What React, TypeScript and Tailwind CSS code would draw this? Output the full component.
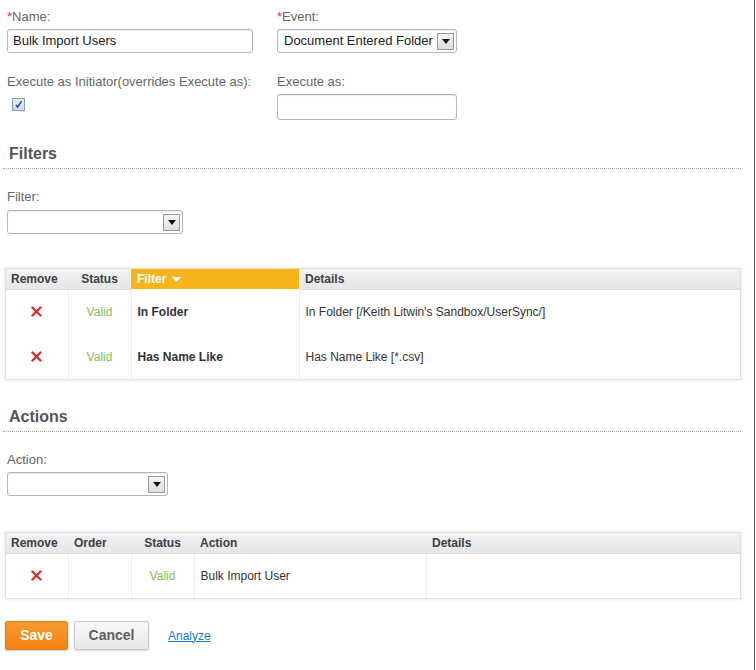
import React from "react";

const font = { fontFamily: '"Liberation Sans", Arial, sans-serif' };

function Arrow() {
  return (
    <div className="flex h-[17px] w-[17px] items-center justify-center border border-[#9a9a9a] bg-gradient-to-b from-[#f6f6f6] to-[#dcdcdc]">
      <svg width="8" height="5" viewBox="0 0 8 5">
        <path d="M0 0 H8 L4 5 Z" fill="#111" />
      </svg>
    </div>
  );
}

function Select({ w, value }: { w: string; value?: string }) {
  return (
    <div
      className={`flex h-[24px] items-center justify-between rounded-[3px] border border-[#b5b5b5] bg-white pl-[6px] pr-[2px] text-[13px] text-[#222] shadow-[inset_0_1px_1px_rgba(0,0,0,0.08)] ${w}`}
    >
      <span className="whitespace-nowrap">{value ?? ""}</span>
      <Arrow />
    </div>
  );
}

function XIcon() {
  return (
    <svg width="11" height="11" viewBox="0 0 11 11">
      <path d="M1.5 1.5 L9.5 9.5 M9.5 1.5 L1.5 9.5" stroke="#d2302a" strokeWidth="2.4" strokeLinecap="round" />
    </svg>
  );
}

function SectionHeading({ title }: { title: string }) {
  return (
    <div>
      <div className="h-[20px] pl-[2px] text-[16px] font-bold leading-[20px] text-[#555]">{title}</div>
      <div className="mx-[-4px] mt-[4px] w-[738px] border-t border-dotted border-[#a8a8a8]" />
    </div>
  );
}

const th = "h-[20px] border-b border-[#dcdcdc] bg-gradient-to-b from-[#f2f2f2] to-[#e6e6e6] text-[12px] font-bold text-[#3c4048] align-middle";
const td = "h-[45px] border-l border-[#ececec] align-middle text-[12px]";
const dark = "text-[#333]";
const green = "text-[#86bd52]";

export default function App() {
  return (
    <div className="flex min-h-[670px] bg-white" style={font}>
      <div className="w-[754px] pl-[7px] pt-[9px]">
        {/* Top form */}
        <div className="flex">
          <div className="w-[270px]">
            <div className="text-[13px] leading-[16px] text-[#666]">
              <span className="text-[#d33]">*</span>Name:
            </div>
            <div className="mt-[4px] flex h-[24px] w-[246px] items-center rounded-[3px] border border-[#b5b5b5] pl-[5px] text-[13px] text-[#222] shadow-[inset_0_1px_1px_rgba(0,0,0,0.08)]">
              Bulk Import Users
            </div>
          </div>
          <div>
            <div className="text-[13px] leading-[16px] text-[#666]">
              <span className="text-[#d33]">*</span>Event:
            </div>
            <div className="mt-[4px]">
              <Select w="w-[180px]" value="Document Entered Folder" />
            </div>
          </div>
        </div>

        <div className="mt-[21px] flex">
          <div className="w-[270px]">
            <div className="text-[13px] leading-[16px] text-[#666]">Execute as Initiator(overrides Execute as):</div>
            <div className="ml-[5px] mt-[8px] flex h-[13px] w-[13px] items-center justify-center border border-[#8c9cb0] bg-gradient-to-b from-[#e8edf4] to-[#cfd8e4]">
              <svg width="9" height="9" viewBox="0 0 9 9">
                <path d="M2 5 L3.6 7.2 L7.5 1.2" stroke="#2b4f9e" strokeWidth="1.5" fill="none" />
              </svg>
            </div>
          </div>
          <div>
            <div className="text-[13px] leading-[16px] text-[#666]">Execute as:</div>
            <div className="mt-[4px] h-[26px] w-[180px] rounded-[3px] border border-[#b5b5b5] shadow-[inset_0_1px_1px_rgba(0,0,0,0.08)]" />
          </div>
        </div>

        {/* Filters */}
        <div className="mt-[24px]">
          <SectionHeading title="Filters" />
        </div>
        <div className="mt-[20px] text-[13px] leading-[16px] text-[#666]">Filter:</div>
        <div className="mt-[5px]">
          <Select w="w-[176px]" />
        </div>

        <div className="ml-[-2px] mt-[34px] w-[736px] border border-[#e0e0e0] shadow-[0_0_4px_rgba(0,0,0,0.12)]">
          <table className="w-full border-collapse">
            <thead>
              <tr>
                <th className={`${th} w-[62px] pl-[5px] text-left`}>Remove</th>
                <th className={`${th} w-[63px] text-center`}>Status</th>
                <th className="h-[20px] w-[168px] bg-[#f5b41c] pl-[6px] text-left text-[12px] font-bold text-white">
                  <span className="inline-flex items-center gap-[6px]">
                    Filter
                    <svg width="9" height="5" viewBox="0 0 9 5">
                      <path d="M0 0 H9 L4.5 5 Z" fill="#fff" />
                    </svg>
                  </span>
                </th>
                <th className={`${th} pl-[6px] text-left`}>Details</th>
              </tr>
            </thead>
            <tbody>
              {[
                ["In Folder", "In Folder [/Keith Litwin's Sandbox/UserSync/]"],
                ["Has Name Like", "Has Name Like [*.csv]"],
              ].map(([f, d]) => (
                <tr key={f}>
                  <td className="h-[45px] align-middle">
                    <div className="flex justify-center">
                      <XIcon />
                    </div>
                  </td>
                  <td className={`${td} ${green} text-center`}>Valid</td>
                  <td className={`${td} ${dark} pl-[6px] font-bold`}>{f}</td>
                  <td className={`${td} ${dark} pl-[6px]`}>{d}</td>
                </tr>
              ))}
            </tbody>
          </table>
        </div>

        {/* Actions */}
        <div className="mt-[27px]">
          <SectionHeading title="Actions" />
        </div>
        <div className="mt-[20px] text-[13px] leading-[16px] text-[#666]">Action:</div>
        <div className="mt-[4px]">
          <Select w="w-[161px]" />
        </div>

        <div className="ml-[-2px] mt-[36px] w-[736px] border border-[#e0e0e0] shadow-[0_0_4px_rgba(0,0,0,0.12)]">
          <table className="w-full border-collapse">
            <thead>
              <tr>
                <th className={`${th} w-[62px] pl-[5px] text-left`}>Remove</th>
                <th className={`${th} w-[63px] pl-[6px] text-left`}>Order</th>
                <th className={`${th} w-[63px] text-center`}>Status</th>
                <th className={`${th} w-[232px] pl-[6px] text-left`}>Action</th>
                <th className={`${th} pl-[6px] text-left`}>Details</th>
              </tr>
            </thead>
            <tbody>
              <tr>
                <td className="h-[45px] align-middle">
                  <div className="flex justify-center">
                    <XIcon />
                  </div>
                </td>
                <td className={td}></td>
                <td className={`${td} ${green} text-center`}>Valid</td>
                <td className={`${td} ${dark} pl-[6px]`}>Bulk Import User</td>
                <td className={td}></td>
              </tr>
            </tbody>
          </table>
        </div>

        {/* Buttons */}
        <div className="ml-[-2px] mt-[22px] flex items-center">
          <button className="h-[29px] w-[63px] rounded-[2px] border border-[#e5780e] bg-gradient-to-b from-[#fa9a2e] to-[#f0820f] text-[14px] font-bold text-white shadow-[0_1px_2px_rgba(0,0,0,0.2)]">
            Save
          </button>
          <button className="ml-[6px] h-[29px] w-[75px] rounded-[2px] border border-[#c8c8c8] bg-gradient-to-b from-[#f8f8f8] to-[#e8e8e8] text-[14px] font-bold text-[#5a5f66] shadow-[0_1px_2px_rgba(0,0,0,0.15)]">
            Cancel
          </button>
          <a className="ml-[19px] text-[12px] text-[#1a7cc8] underline">Analyze</a>
        </div>
      </div>
      <div className="w-px bg-[#5a5a5a]" />
      <div className="w-px bg-white" />
    </div>
  );
}
